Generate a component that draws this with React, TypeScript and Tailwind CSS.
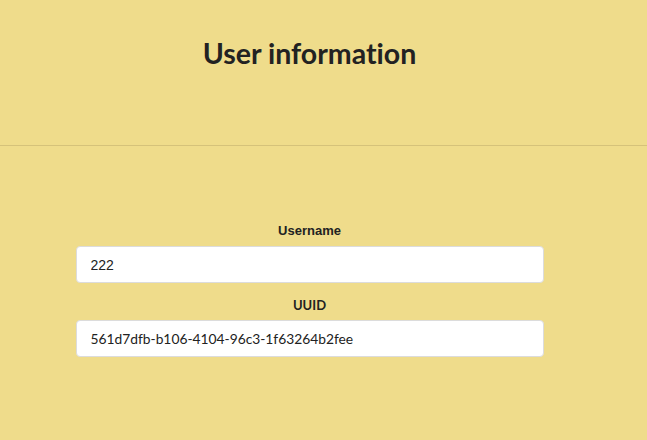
export default function App() {
  return (
    <div
      className="min-h-[440px] w-full bg-[#efdc8b] text-[#222] [font-variant-ligatures:none]"
      style={{ fontFamily: "Lato, sans-serif" }}
    >
      <div className="w-[619px]">
        <header className="flex h-[145px] items-start justify-center pt-[33px]">
          <h1 className="text-[28.5px] font-bold leading-[40px]">User information</h1>
        </header>
      </div>
      <div className="h-px w-full bg-[#d5c27a]" />
      <div className="w-[619px]">
        <form className="flex flex-col items-center pt-[77px]">
          <label className="mb-[7px] font-['Liberation_Sans',sans-serif] text-[13px] font-bold leading-[16px]">
            Username
          </label>
          <input
            readOnly
            value="222"
            className="h-[37px] w-[468px] rounded-[4px] border border-[#dcdcdc] bg-white px-[14px] font-['Liberation_Sans',sans-serif] text-[14px] text-[#222] outline-none"
          />
          <label className="mb-[7px] mt-[14px] text-[13px] font-bold leading-[16px]">UUID</label>
          <input
            readOnly
            value="561d7dfb-b106-4104-96c3-1f63264b2fee"
            className="h-[37px] w-[468px] rounded-[4px] border border-[#dcdcdc] bg-white px-[14px] text-[13.8px] text-[#222] outline-none [font-variant-ligatures:none]"
          />
        </form>
      </div>
    </div>
  );
}
